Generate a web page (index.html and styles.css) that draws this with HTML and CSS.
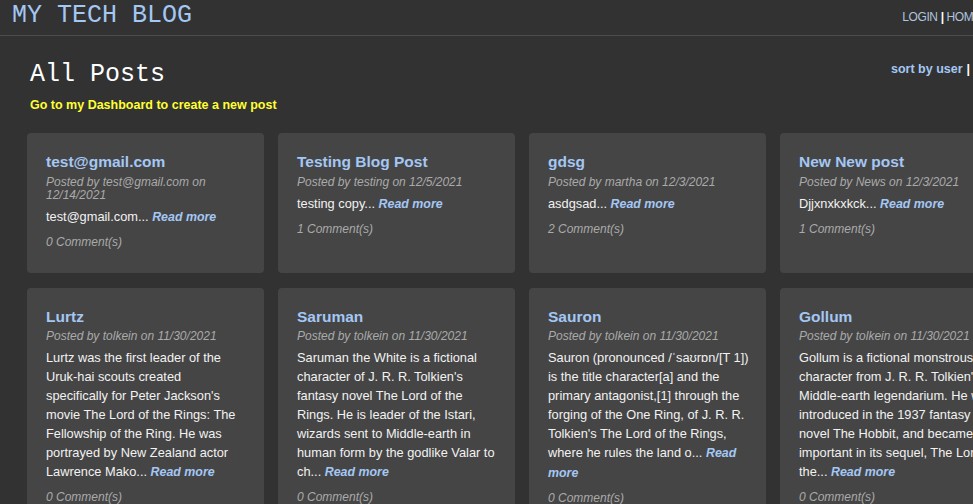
FILE: index.html
```html
<!DOCTYPE html>
<html lang="en">
<head>
<meta charset="utf-8">
<title>My Tech Blog</title>
<link rel="stylesheet" href="styles.css">
</head>
<body>
<div class="page">
  <header class="site-header">
    <h1 class="brand">MY TECH BLOG</h1>
    <nav class="nav"><a href="#">LOGIN</a><span class="sep">|</span><a href="#">HOME</a></nav>
  </header>
  <main class="main">
    <div class="top-row">
      <div>
        <h2 class="page-title">All Posts</h2>
        <a class="dash-link" href="#">Go to my Dashboard to create a new post</a>
      </div>
      <div class="sort"><a href="#">sort by user</a><span class="sep">|</span><a href="#">sort by date</a></div>
    </div>
    <section class="grid">
      <article class="card">
        <h3 class="card-title">test@gmail.com</h3>
        <p class="meta">Posted by test@gmail.com on 12/14/2021</p>
        <p class="body">test@gmail.com... <a class="more" href="#">Read more</a></p>
        <p class="comments">0 Comment(s)</p>
      </article>
      <article class="card">
        <h3 class="card-title">Testing Blog Post</h3>
        <p class="meta">Posted by testing on 12/5/2021</p>
        <p class="body">testing copy... <a class="more" href="#">Read more</a></p>
        <p class="comments">1 Comment(s)</p>
      </article>
      <article class="card">
        <h3 class="card-title">gdsg</h3>
        <p class="meta">Posted by martha on 12/3/2021</p>
        <p class="body">asdgsad... <a class="more" href="#">Read more</a></p>
        <p class="comments">2 Comment(s)</p>
      </article>
      <article class="card">
        <h3 class="card-title">New New post</h3>
        <p class="meta">Posted by News on 12/3/2021</p>
        <p class="body">Djjxnxkxkck... <a class="more" href="#">Read more</a></p>
        <p class="comments">1 Comment(s)</p>
      </article>
      <article class="card">
        <h3 class="card-title">Lurtz</h3>
        <p class="meta">Posted by tolkein on 11/30/2021</p>
        <p class="body">Lurtz was the first leader of the Uruk-hai scouts created specifically for Peter Jackson's movie The Lord of the Rings: The Fellowship of the Ring. He was portrayed by New Zealand actor Lawrence Mako... <a class="more" href="#">Read more</a></p>
        <p class="comments">0 Comment(s)</p>
      </article>
      <article class="card">
        <h3 class="card-title">Saruman</h3>
        <p class="meta">Posted by tolkein on 11/30/2021</p>
        <p class="body">Saruman the White is a fictional character of J. R. R. Tolkien's fantasy novel The Lord of the Rings. He is leader of the Istari, wizards sent to Middle-earth in human form by the godlike Valar to ch... <a class="more" href="#">Read more</a></p>
        <p class="comments">0 Comment(s)</p>
      </article>
      <article class="card">
        <h3 class="card-title">Sauron</h3>
        <p class="meta">Posted by tolkein on 11/30/2021</p>
        <p class="body"><span class="keep">Sauron (pronounced /ˈsaʊrɒn/[T 1])</span> is the title character[a] and the primary antagonist,[1] through the forging of the One Ring, of J. R. R. Tolkien's The Lord of the Rings, where he rules the land o... <a class="more" href="#">Read more</a></p>
        <p class="comments">0 Comment(s)</p>
      </article>
      <article class="card">
        <h3 class="card-title">Gollum</h3>
        <p class="meta">Posted by tolkein on 11/30/2021</p>
        <p class="body">Gollum is a fictional monstrous character from J. R. R. Tolkien's Middle-earth legendarium. He was introduced in the 1937 fantasy novel The Hobbit, and became important in its sequel, The Lord of the... <a class="more" href="#">Read more</a></p>
        <p class="comments">0 Comment(s)</p>
      </article>
    </section>
  </main>
</div>
</body>
</html>
```

FILE: styles.css
```css
html, body {
  margin: 0;
  padding: 0;
  background: #323232;
  overflow: hidden;
}
body {
  font-family: "Liberation Sans", Arial, Helvetica, sans-serif;
  color: #f2f2f2;
}
a { text-decoration: none; }

.page {
  width: 993px;
}

.site-header {
  display: flex;
  align-items: center;
  justify-content: space-between;
  height: 35px;
  padding: 0 12px;
  border-bottom: 1px solid #4c4c4c;
}
.brand {
  margin: 0;
  font-family: "Courier New", "Nimbus Mono PS", FreeMono, "Liberation Mono", monospace;
  font-weight: normal;
  font-size: 25px;
  line-height: 28px;
  color: #a4c7f4;
  position: relative;
  top: -2px;
}
.nav {
  font-size: 12px;
  letter-spacing: -0.4px;
  color: #ffffff;
  position: relative;
  top: -1px;
}
.nav a { color: #b0c4de; }
.nav .sep { margin: 0 3px; font-weight: bold; }

.main {
  padding: 0 30px 0 27px;
}
.top-row {
  display: grid;
  grid-template-columns: 864px max-content;
  align-items: start;
}
.page-title {
  margin: 24px 0 0 3px;
  font-family: "Courier New", "Nimbus Mono PS", FreeMono, "Liberation Mono", monospace;
  font-weight: normal;
  font-size: 25px;
  line-height: 30px;
  color: #ffffff;
}
.dash-link {
  display: block;
  margin: 7px 0 0 3px;
  font-size: 12.5px;
  font-weight: bold;
  line-height: 16px;
  color: #ffff33;
}
.sort {
  margin-top: 25px;
  font-size: 12.5px;
  font-weight: bold;
  line-height: 16px;
  color: #ffffff;
  white-space: nowrap;
}
.sort a { color: #a4c7f4; }
.sort .sep { margin: 0 4px; }

.grid {
  display: grid;
  grid-template-columns: repeat(4, 237px);
  column-gap: 14px;
  row-gap: 15px;
  margin-top: 20px;
}
.card {
  background: #454545;
  border-radius: 4px;
  padding: 19px 19px 24px;
}
.card-title {
  margin: 0;
  font-size: 15.5px;
  line-height: 20px;
  font-weight: bold;
  color: #a4c7f4;
}
.meta {
  margin: 3.5px 0 0;
  font-size: 12px;
  line-height: 13px;
  font-style: italic;
  color: #aaaaaa;
}
.body {
  margin: 5px 0 0;
  font-size: 12.8px;
  line-height: 19px;
  color: #f2f2f2;
}
.keep { white-space: nowrap; }
.more {
  font-size: 12.4px;
  font-weight: bold;
  font-style: italic;
  color: #a4c7f4;
}
.comments {
  margin: 8px 0 0;
  font-size: 12px;
  line-height: 14px;
  font-style: italic;
  color: #aaaaaa;
}
```
